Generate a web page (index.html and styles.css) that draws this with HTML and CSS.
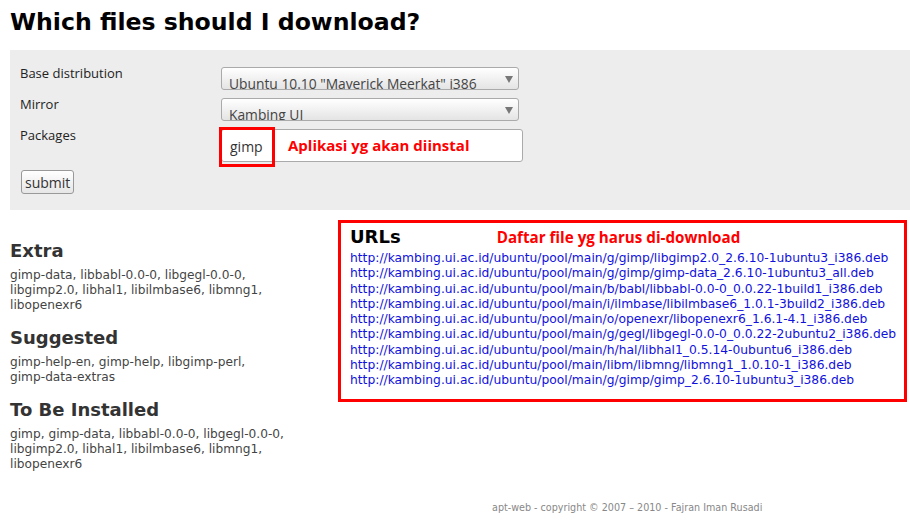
FILE: index.html
```html
<!DOCTYPE html>
<html lang="en">
<head>
    <meta charset="UTF-8">
    <title>apt-web</title>
    <link rel="stylesheet" href="styles.css">
</head>
<body>
    <h1>Which files should I download?</h1>

    <form class="query">
        <label>Base distribution</label>
        <div class="select"><span>Ubuntu 10.10 "Maverick Meerkat" i386</span></div>

        <label>Mirror</label>
        <div class="select"><span>Kambing UI</span></div>

        <label>Packages</label>
        <div class="packages">
            <input type="text" value="gimp">
            <span class="mark"></span>
            <span class="note">Aplikasi yg akan diinstal</span>
        </div>

        <div class="actions">
            <button type="button">submit</button>
        </div>
    </form>

    <div class="result">
        <div class="deps">
            <h3>Extra</h3>
            <p>gimp-data, libbabl-0.0-0, libgegl-0.0-0, libgimp2.0, libhal1, libilmbase6, libmng1, libopenexr6</p>
            <h3>Suggested</h3>
            <p>gimp-help-en, gimp-help, libgimp-perl, <span class="pkg">gimp-data-extras</span></p>
            <h3>To Be Installed</h3>
            <p>gimp, gimp-data, libbabl-0.0-0, libgegl-0.0-0, libgimp2.0, libhal1, libilmbase6, libmng1, libopenexr6</p>
        </div>

        <div class="urls">
            <div class="urls-head">
                <h3>URLs</h3>
                <span class="note">Daftar file yg harus di-download</span>
            </div>
            <ul>
                <li><a href="#">http://kambing.ui.ac.id/ubuntu/pool/main/g/gimp/libgimp2.0_2.6.10-1ubuntu3_i386.deb</a></li>
                <li><a href="#">http://kambing.ui.ac.id/ubuntu/pool/main/g/gimp/gimp-data_2.6.10-1ubuntu3_all.deb</a></li>
                <li><a href="#">http://kambing.ui.ac.id/ubuntu/pool/main/b/babl/libbabl-0.0-0_0.0.22-1build1_i386.deb</a></li>
                <li><a href="#">http://kambing.ui.ac.id/ubuntu/pool/main/i/ilmbase/libilmbase6_1.0.1-3build2_i386.deb</a></li>
                <li><a href="#">http://kambing.ui.ac.id/ubuntu/pool/main/o/openexr/libopenexr6_1.6.1-4.1_i386.deb</a></li>
                <li><a href="#">http://kambing.ui.ac.id/ubuntu/pool/main/g/gegl/libgegl-0.0-0_0.0.22-2ubuntu2_i386.deb</a></li>
                <li><a href="#">http://kambing.ui.ac.id/ubuntu/pool/main/h/hal/libhal1_0.5.14-0ubuntu6_i386.deb</a></li>
                <li><a href="#">http://kambing.ui.ac.id/ubuntu/pool/main/libm/libmng/libmng1_1.0.10-1_i386.deb</a></li>
                <li><a href="#">http://kambing.ui.ac.id/ubuntu/pool/main/g/gimp/gimp_2.6.10-1ubuntu3_i386.deb</a></li>
            </ul>
        </div>

        <div class="footer">apt-web - copyright &copy; 2007 &ndash; 2010 - Fajran Iman Rusadi</div>
    </div>
</body>
</html>
```

FILE: styles.css
```css
body {
    margin: 0;
    padding: 0 0 0 10px;
    font-family: "DejaVu Sans", sans-serif;
    color: #444;
    background: #fff;
}

h1 {
    margin: 0;
    padding-top: 7px;
    font-size: 23.6px;
    line-height: 30px;
    font-weight: bold;
    color: #000;
}

/* form */

.query {
    margin-top: 13px;
    padding: 17px 10px 16px 10px;
    background-color: #ededed;
    display: grid;
    grid-template-columns: 201px 1fr;
    row-gap: 8px;
    font-family: "Open Sans", sans-serif;
    font-size: 13px;
    color: #222;
}

.query label {
    line-height: 12px;
}

.select {
    position: relative;
    width: 298px;
    height: 23px;
    box-sizing: border-box;
    border: 1px solid #aaa;
    border-radius: 3px;
    background: linear-gradient(#fff, #e4e4e4);
    overflow: hidden;
    padding: 7px 0 0 7px;
    font-size: 13.8px;
    line-height: 18px;
    color: #444;
    white-space: nowrap;
}

.select:after {
    content: "";
    position: absolute;
    right: 5px;
    top: 8px;
    border-left: 4px solid transparent;
    border-right: 4px solid transparent;
    border-top: 7px solid #777;
}

.packages {
    position: relative;
    height: 33px;
}

.packages input {
    width: 302px;
    height: 33px;
    box-sizing: border-box;
    margin: 0;
    border: 1px solid #aaa;
    border-radius: 3px;
    padding: 2px 8px 0 8px;
    font-family: "Open Sans", sans-serif;
    font-size: 14px;
    color: #333;
    background: #fff;
}

.mark {
    position: absolute;
    left: -2px;
    top: -2px;
    width: 56px;
    height: 40px;
    box-sizing: border-box;
    border: 3px solid #f00;
}

.note {
    font-family: "Open Sans", sans-serif;
    font-weight: bold;
    color: #f00;
}

.packages .note {
    position: absolute;
    left: 67px;
    top: 6px;
    font-size: 15px;
}

.actions {
    grid-column: 1 / 3;
}

.actions button {
    margin-left: 1px;
    height: 24px;
    padding: 0 3px;
    border: 1px solid #999;
    border-radius: 3px;
    background: linear-gradient(#fff, #e6e6e6);
    font-family: "Open Sans", sans-serif;
    font-size: 14px;
    color: #333;
}

/* result */

.result {
    display: grid;
    grid-template-columns: 328px 569px;
    align-items: start;
}

.deps {
    width: 300px;
    padding-top: 16px;
}

h3 {
    margin: 14px 0 6px 0;
    font-size: 18px;
    line-height: 22px;
    color: #333;
}

.deps p {
    margin: 0;
    font-size: 12.2px;
    line-height: 15px;
}

.pkg {
    white-space: nowrap;
}

.urls {
    margin-top: 10px;
    border: 3px solid #f00;
    padding: 3px 9px 11px 9px;
}

.urls-head {
    display: flex;
    align-items: baseline;
    gap: 96px;
}

.urls h3 {
    margin: 0;
    color: #000;
}

.urls-head .note {
    font-size: 15.2px;
}

.urls ul {
    list-style: none;
    margin: 3px 0 0 0;
    padding: 0;
    font-size: 12.3px;
    line-height: 15.25px;
    white-space: nowrap;
}

.urls a {
    color: #11d;
    text-decoration: none;
}

.footer {
    grid-column: 2;
    margin-top: 30px;
    padding-left: 154px;
    font-size: 9.6px;
    color: #888;
}
```
